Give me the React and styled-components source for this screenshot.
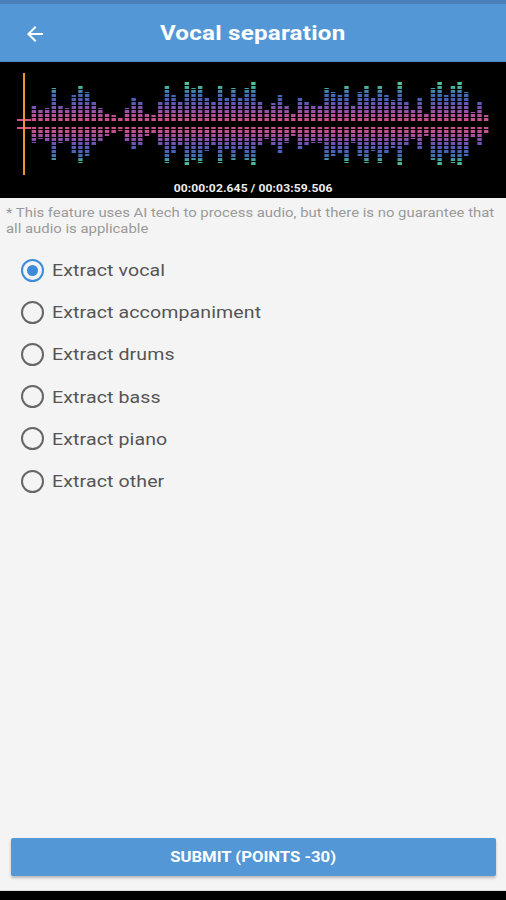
import React, { useState } from 'react';
import styled, { createGlobalStyle } from 'styled-components';

const GlobalStyle = createGlobalStyle`
    body {
        margin: 0;
        background: #f4f4f4;
        font-family: Roboto, "Noto Sans", Arial, sans-serif;
    }
`;

// the app screenshot is a little wider than it is tall, text included
const Stretch = styled.span`
    display: inline-block;
    transform: scaleX(1.15);
    transform-origin: ${p => p.origin || 'left center'};
    white-space: nowrap;
`;

const Page = styled.div`
    display: flex;
    flex-direction: column;
    width: 506px;
    height: 900px;
    background: #f4f4f4;
    overflow: hidden;
`;

const StatusStrip = styled.div`
    height: 4px;
    background: #4a80b7;
`;

const Header = styled.div`
    position: relative;
    display: flex;
    align-items: center;
    justify-content: center;
    height: 58px;
    background: #5397d6;
    box-shadow: inset 0 -1px 0 #4a86bf;
`;

const BackButton = styled.button`
    position: absolute;
    left: 23px;
    top: 18px;
    display: flex;
    padding: 0;
    border: none;
    background: none;
    color: #fff;
`;

const Title = styled.h1`
    margin: 0;
    color: #fff;
    font-size: 21px;
    font-weight: 700;
    letter-spacing: 0.2px;
`;

const WavePanel = styled.div`
    display: flex;
    flex-direction: column;
    align-items: center;
    height: 136px;
    background: #000;
`;

const TimeLabel = styled.div`
    margin-top: -2px;
    color: #eee;
    font-size: 10.5px;
    font-weight: 700;
    letter-spacing: 0.1px;
`;

const Notice = styled.p`
    width: 434px;
    margin: 7px 6px 0;
    color: #9a9a9a;
    font-size: 12.95px;
    line-height: 16px;
    transform: scaleX(1.15);
    transform-origin: left top;
`;

const Options = styled.div`
    display: flex;
    flex-direction: column;
    margin-top: 12px;
    padding-left: 21px;
`;

const OptionRow = styled.label`
    display: flex;
    align-items: center;
    gap: 8px;
    height: 42.2px;
    color: #555;
    font-size: 17px;
    letter-spacing: 0.1px;
    cursor: pointer;
`;

const Radio = styled.span`
    display: flex;
    align-items: center;
    justify-content: center;
    box-sizing: border-box;
    width: 23px;
    height: 23px;
    border-radius: 50%;
    border: 2px solid ${p => (p.checked ? '#3d8bd9' : '#666')};

    &::after {
        content: '';
        width: 11px;
        height: 11px;
        border-radius: 50%;
        background: ${p => (p.checked ? '#3d8bd9' : 'transparent')};
    }
`;

const Spacer = styled.div`
    flex: 1;
`;

const SubmitButton = styled.button`
    margin: 0 10px 0 11px;
    height: 38px;
    border: none;
    border-radius: 2px;
    background: #5397d6;
    color: #fff;
    font-family: Roboto, Arial, sans-serif;
    font-size: 14.5px;
    font-weight: 700;
    box-shadow: 0 2px 3px rgba(0, 0, 0, 0.25);
`;

const BottomBar = styled.div`
    margin-top: 15px;
    height: 9px;
    background: #000;
    box-shadow: 0 -1px 0 #ddd;
`;

const upper = [
    2, 17, 12, 14, 34, 17, 14, 27, 37, 30, 20, 14, 9, 7, 4, 14, 24, 20, 9, 7, 20, 37, 27, 20, 40, 34, 37, 25, 20, 37, 24, 34, 24, 34, 40,
    20, 12, 19, 27, 17, 9, 24, 20, 17, 17, 34, 30, 27, 37, 17, 30, 37, 25, 37, 27, 22, 40, 20, 12, 24, 9, 34, 40, 27, 37, 40, 30, 10, 20, 7,
];

const options = [
    'Extract vocal',
    'Extract accompaniment',
    'Extract drums',
    'Extract bass',
    'Extract piano',
    'Extract other',
];

const stops = [
    ['0', '#cf5288'],
    ['0.12', '#c25090'],
    ['0.25', '#9a52a8'],
    ['0.4', '#6a57b4'],
    ['0.55', '#4760b6'],
    ['0.7', '#3f72b2'],
    ['0.8', '#44aa9c'],
    ['1', '#58d4a0'],
];

const Waveform = () => {
    const topBase = 60;
    const bottomBase = 65;
    const pitch = (486 - 27) / (upper.length - 1);

    return (
        <svg width="506" height="122" viewBox="0 0 506 122">
            <defs>
                <linearGradient id="up" gradientUnits="userSpaceOnUse" x1="0" y1={topBase} x2="0" y2={topBase - 42}>
                    {stops.map(([o, c]) => <stop key={o} offset={o} stopColor={c} />)}
                </linearGradient>
                <linearGradient id="down" gradientUnits="userSpaceOnUse" x1="0" y1={bottomBase} x2="0" y2={bottomBase + 42}>
                    {stops.map(([o, c]) => <stop key={o} offset={o} stopColor={c} />)}
                </linearGradient>
                <pattern id="seg" patternUnits="userSpaceOnUse" width="506" height="4">
                    <rect x="0" y="3" width="506" height="1" fill="#000" />
                </pattern>
            </defs>
            {upper.map((h, i) => {
                const x = 27 + i * pitch - 2;
                const d = Math.max(2, Math.round(h * 0.97));
                return (
                    <g key={i}>
                        <rect x={x} y={topBase - h} width="4.4" height={h} fill="url(#up)" />
                        <rect x={x} y={bottomBase} width="4.4" height={d} fill="url(#down)" />
                    </g>
                );
            })}
            <rect x="17" y={topBase - 3} width="14" height="2.5" fill="#cf5288" />
            <rect x="17" y={bottomBase} width="14" height="2.5" fill="#cf5288" />
            <rect x="0" y="0" width="506" height="122" fill="url(#seg)" />
            <rect x="23" y="11" width="2" height="102" fill="#e8962e" />
        </svg>
    );
};

const BackArrow = () => (
    <svg width="24" height="24" viewBox="0 0 24 24" fill="currentColor">
        <path d="M20 11H7.83l5.59-5.59L12 4l-8 8 8 8 1.41-1.41L7.83 13H20v-2z" />
    </svg>
);

const App = () => {
    const [selected, setSelected] = useState(0);

    return (
        <Page>
            <GlobalStyle />
            <StatusStrip />
            <Header>
                <BackButton aria-label="Back">
                    <BackArrow />
                </BackButton>
                <Title>
                    <Stretch origin="center">Vocal separation</Stretch>
                </Title>
            </Header>
            <WavePanel>
                <Waveform />
                <TimeLabel>
                    <Stretch origin="center">00:00:02.645 / 00:03:59.506</Stretch>
                </TimeLabel>
            </WavePanel>
            <Notice>
                * This feature uses AI tech to process audio, but there is no guarantee that all audio is applicable
            </Notice>
            <Options>
                {options.map((label, i) => (
                    <OptionRow key={label} onClick={() => setSelected(i)}>
                        <Radio checked={selected === i} />
                        <Stretch>{label}</Stretch>
                    </OptionRow>
                ))}
            </Options>
            <Spacer />
            <SubmitButton>
                <Stretch origin="center">SUBMIT (POINTS -30)</Stretch>
            </SubmitButton>
            <BottomBar />
        </Page>
    );
};

export default App;
